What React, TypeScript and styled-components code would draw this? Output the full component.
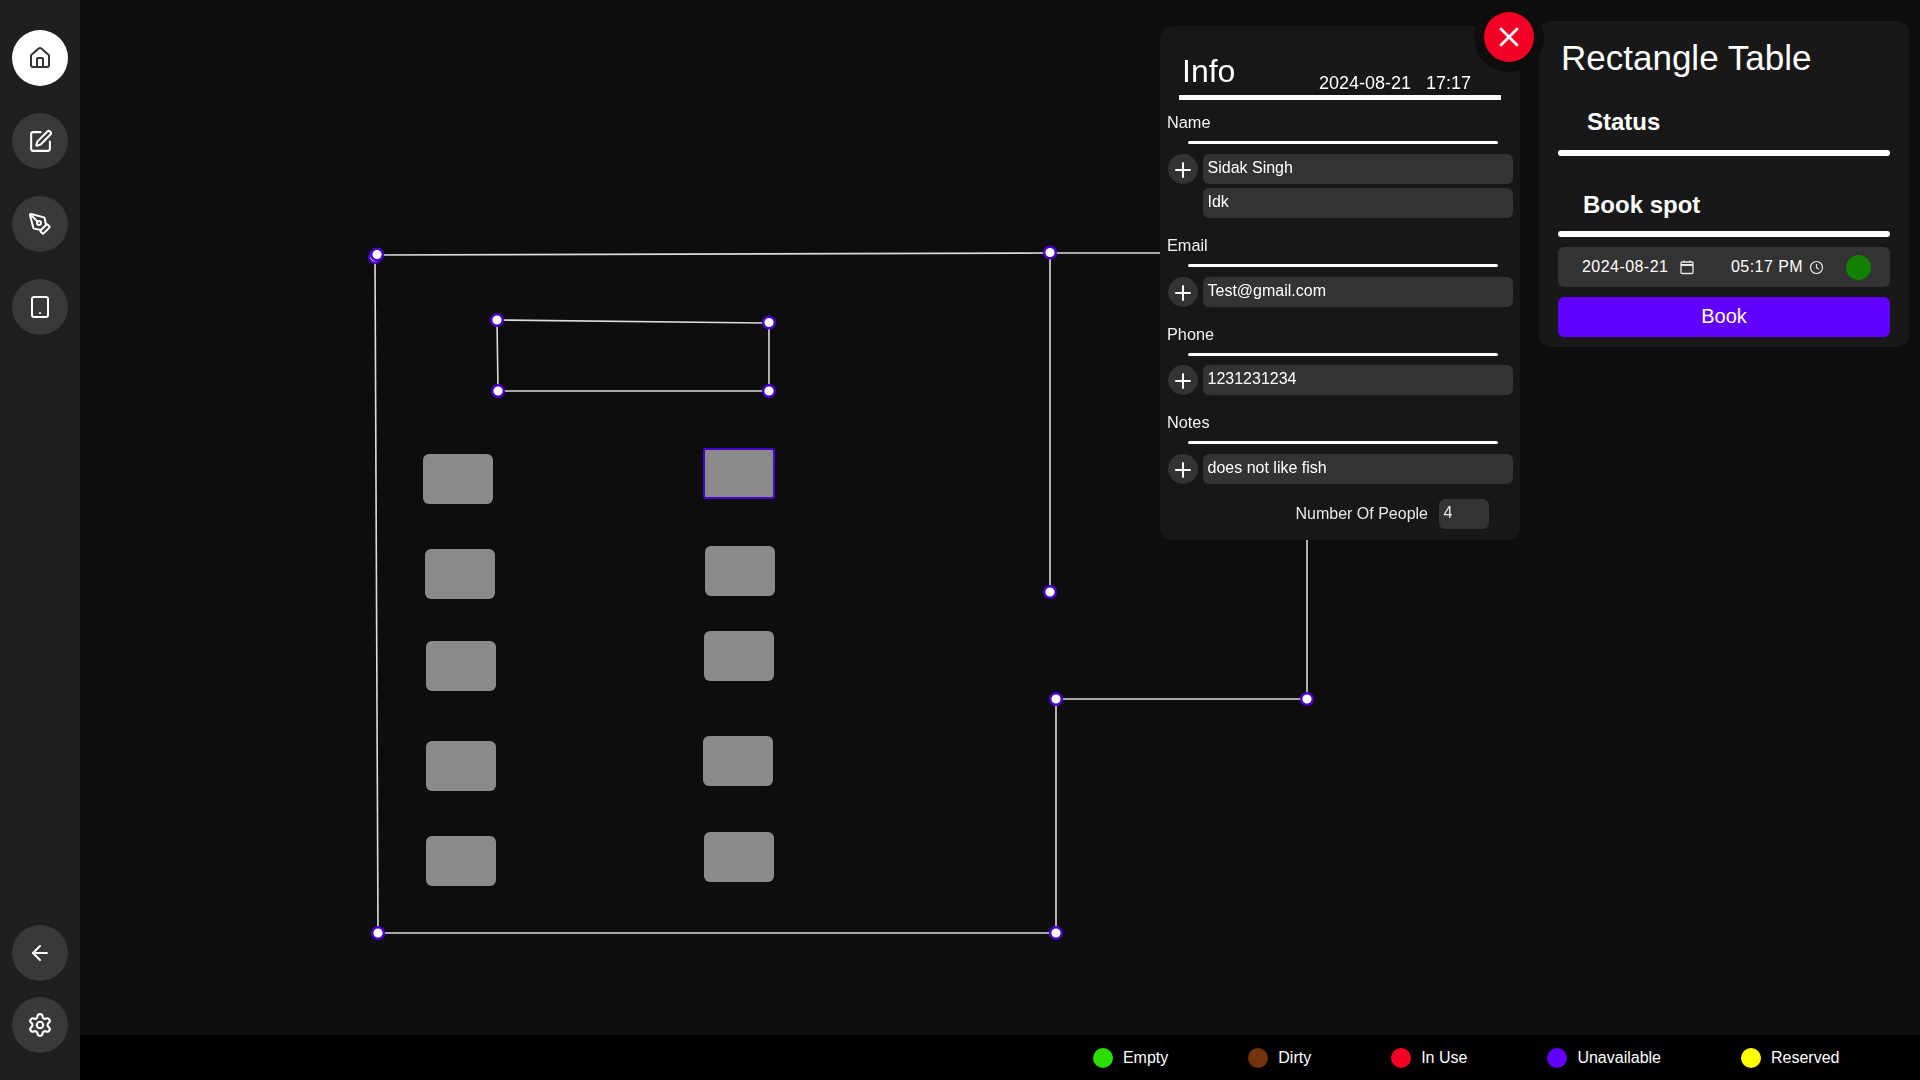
import React from 'react'
import styled, { createGlobalStyle } from 'styled-components'
import { ArrowLeft, House, PenTool, Plus, Settings, SquarePen, Tablet, X } from 'lucide-react'

const GlobalStyle = createGlobalStyle`
  html, body { margin: 0; padding: 0; background: #0d0d0d; }
  * { box-sizing: border-box; }
  body { font-family: "Liberation Sans", Arial, sans-serif; color: #fff; overflow: hidden; }
`

const Page = styled.div`
  display: flex;
  width: 1920px;
  height: 1080px;
`

// sidebar
const Sidebar = styled.nav`
  width: 80px;
  flex: none;
  display: flex;
  flex-direction: column;
  justify-content: space-between;
  align-items: center;
  padding: 30px 0 27px;
  background: #1f1f1f;
`
const NavGroup = styled.div<{ $gap: number }>`
  display: flex;
  flex-direction: column;
  gap: ${p => p.$gap}px;
`
const NavButton = styled.button<{ $active?: boolean }>`
  width: 56px;
  height: 56px;
  padding: 0;
  border: 0;
  border-radius: 50%;
  display: flex;
  align-items: center;
  justify-content: center;
  background: ${p => (p.$active ? '#fff' : '#3a3939')};
  color: ${p => (p.$active ? '#333' : '#fff')};
`

// main area
const Main = styled.main`
  flex: 1;
  display: flex;
  flex-direction: column;
  min-width: 0;
`
const Canvas = styled.div`
  position: relative;
  flex: 1;
  background: #0d0d0d;
`
const Plan = styled.svg`
  position: absolute;
  inset: 0;
  width: 100%;
  height: 100%;
`
const Legend = styled.footer`
  height: 45px;
  flex: none;
  display: flex;
  justify-content: flex-end;
  align-items: center;
  gap: 80px;
  padding-right: 80.5px;
  background: #000;
`
const LegendItem = styled.div`
  display: flex;
  align-items: center;
  gap: 10px;
  font-size: 16px;
`
const Dot = styled.span<{ $color: string; $size?: number }>`
  display: block;
  flex: none;
  width: ${p => p.$size || 20}px;
  height: ${p => p.$size || 20}px;
  border-radius: 50%;
  background: ${p => p.$color};
`

// info panel
const InfoPanel = styled.section`
  position: absolute;
  top: 26px;
  right: 400px;
  z-index: 2;
  width: 360px;
  padding: 0 7px 11px;
  border-radius: 12px;
  background: rgba(24, 24, 24, 0.97);
  backdrop-filter: blur(16px);
`
const CloseButton = styled.button`
  position: absolute;
  top: -14px;
  left: 324px;
  width: 50px;
  height: 50px;
  padding: 0;
  border: 0;
  border-radius: 50%;
  display: flex;
  align-items: center;
  justify-content: center;
  color: #fff;
  background: #f50025;
  box-shadow: 0 0 0 10px #0d0d0d;
`
const InfoHeader = styled.header`
  height: 69px;
  margin: 0 12px;
  padding: 0 0 1px 3px;
  display: flex;
  align-items: flex-end;
`
const InfoTitle = styled.h2`
  margin: 0 0 4px;
  width: 137px;
  font-size: 32px;
  line-height: 38px;
  font-weight: 400;
`
const InfoStamp = styled.div`
  font-size: 18px;
  line-height: 21px;
  white-space: pre;
`
const HeaderRule = styled.div`
  height: 5px;
  margin: 0 12px;
  background: #fff;
`
const Section = styled.div`
  margin-top: 12px;
  & + & { margin-top: 17px; }
`
const Label = styled.div`
  height: 20px;
  font-size: 16.3px;
  line-height: 20px;
  color: #f2f2f2;
`
const SubRule = styled.div<{ $after: number }>`
  width: 310px;
  height: 3px;
  margin: 9px 0 ${p => p.$after}px 21px;
  border-radius: 2px;
  background: #fff;
`
const FieldRow = styled.div`
  display: flex;
  align-items: center;
  gap: 5px;
  padding-left: 1px;
  & + & { margin-top: 4px; padding-left: 36px; }
`
const AddButton = styled.button`
  width: 30px;
  height: 30px;
  flex: none;
  padding: 1px 0 0;
  border: 0;
  border-radius: 50%;
  display: flex;
  align-items: center;
  justify-content: center;
  color: #fff;
  background: #333;
`
const Field = styled.div<{ $width: number }>`
  width: ${p => p.$width}px;
  height: 30px;
  padding: 0 4.5px;
  border-radius: 6px;
  background: #333;
  font-size: 16px;
  line-height: 28.5px;
  white-space: nowrap;
`
const PeopleRow = styled.div`
  margin-top: 15px;
  padding-right: 24px;
  display: flex;
  justify-content: flex-end;
  align-items: center;
  gap: 11px;
  font-size: 16px;
  color: #e8e8e8;
`

// booking panel
const BookPanel = styled.section`
  position: absolute;
  top: 21px;
  right: 11px;
  z-index: 1;
  width: 370px;
  padding: 16px 19px 10px;
  border-radius: 12px;
  background: #181818;
`
const BookTitle = styled.h1`
  margin: 0;
  padding-left: 3px;
  font-size: 35px;
  line-height: 42px;
  font-weight: 400;
`
const SubHeading = styled.h3<{ $top: number; $indent: number }>`
  height: 28px;
  margin: ${p => p.$top}px 0 0;
  padding-left: ${p => p.$indent}px;
  font-size: 24px;
  line-height: 29px;
  font-weight: 700;
`
const ThickRule = styled.div<{ $top: number }>`
  height: 6px;
  margin-top: ${p => p.$top}px;
  border-radius: 3px;
  background: #fff;
`
const DateRow = styled.div`
  height: 40px;
  margin-top: 10px;
  padding-left: 24px;
  display: flex;
  align-items: center;
  border-radius: 6px;
  background: #333;
  font-size: 16px;
  letter-spacing: 0.45px;
`
const DatePart = styled.span<{ $width: number }>`
  width: ${p => p.$width}px;
  display: flex;
  align-items: center;
  flex: none;
`
const IconSlot = styled.span<{ $left: number }>`
  display: flex;
  margin-left: ${p => p.$left}px;
`
const BookButton = styled.button`
  width: 100%;
  height: 40px;
  margin-top: 10px;
  padding: 0 0 2px;
  border: 0;
  border-radius: 6px;
  background: #6200ff;
  color: #fff;
  font-family: inherit;
  font-size: 20px;
`

const segments = [
  [377, 255, 1050, 253],
  [1050, 253, 1307, 253],
  [1050, 253, 1050, 592],
  [1307, 253, 1307, 699],
  [1307, 699, 1056, 699],
  [1056, 699, 1056, 933],
  [1056, 933, 378, 933],
  [378, 933, 375, 257],
  [497, 320, 769, 323],
  [769, 323, 769, 391],
  [769, 391, 498, 391],
  [498, 391, 497, 320]
]
const nodes = [
  [375, 257], [377, 254.5], [1050, 252.5], [1307, 253], [1050, 592], [1056, 699], [1307, 699], [378, 933], [1056, 933],
  [497, 320], [769, 322.5], [498, 391], [769, 391]
]
const tables = [
  [423, 454], [425, 549], [426, 641], [426, 741], [426, 836],
  [705, 546], [704, 631], [703, 736], [704, 832]
]

const legend = [
  { label: 'Empty', color: '#2adf00' },
  { label: 'Dirty', color: '#74330a' },
  { label: 'In Use', color: '#f50025' },
  { label: 'Unavailable', color: '#6200ff' },
  { label: 'Reserved', color: '#ffff00' }
]

const infoSections = [
  { label: 'Name', after: 10, values: ['Sidak Singh', 'Idk'] },
  { label: 'Email', after: 10, values: ['Test@gmail.com'] },
  { label: 'Phone', after: 9, values: ['1231231234'] },
  { label: 'Notes', after: 10, values: ['does not like fish'] }
]

function CalendarIcon () {
  return <svg width="16" height="16" viewBox="0 0 16 16" fill="none" stroke="#e8e8e8" strokeWidth="1.3">
    <rect x="2" y="3" width="12" height="11.5" rx="1" />
    <path d="M2 6h12" strokeWidth="2" />
    <path d="M5 1.5v2M11 1.5v2" />
  </svg>
}

function ClockIcon () {
  return <svg width="15" height="15" viewBox="0 0 15 15" fill="none" stroke="#e8e8e8" strokeWidth="1.2">
    <circle cx="7.5" cy="7.5" r="6" />
    <path d="M7.5 4v3.7l2.4 1.5" />
  </svg>
}

export default function App () {
  return <Page>
    <GlobalStyle />
    <Sidebar>
      <NavGroup $gap={27}>
        <NavButton $active><House size={24} /></NavButton>
        <NavButton><SquarePen size={25} /></NavButton>
        <NavButton><PenTool size={24} /></NavButton>
        <NavButton><Tablet size={24} /></NavButton>
      </NavGroup>
      <NavGroup $gap={16}>
        <NavButton><ArrowLeft size={24} /></NavButton>
        <NavButton><Settings size={26} /></NavButton>
      </NavGroup>
    </Sidebar>
    <Main>
      <Canvas>
        <Plan viewBox="80 0 1840 1035">
          {segments.map(([x1, y1, x2, y2], i) => (
            <line key={i} x1={x1} y1={y1} x2={x2} y2={y2} stroke="#dcdcdc" strokeWidth="1.6" />
          ))}
          {nodes.map(([cx, cy], i) => (
            <circle key={i} cx={cx} cy={cy} r="5.8" fill="#fff" stroke="#4a00d0" strokeWidth="2.4" />
          ))}
          {tables.map(([x, y], i) => (
            <rect key={i} x={x} y={y} width="70" height="50" rx="6" fill="#8a8a8a" />
          ))}
          <rect x="704" y="449" width="70" height="49" rx="2" fill="#8a8a8a" stroke="#4a00d0" strokeWidth="2" />
        </Plan>
        <BookPanel>
          <BookTitle>Rectangle Table</BookTitle>
          <SubHeading $top={28} $indent={29}>Status</SubHeading>
          <ThickRule $top={15} />
          <SubHeading $top={34} $indent={25}>Book spot</SubHeading>
          <ThickRule $top={13} />
          <DateRow>
            <DatePart $width={149}>2024-08-21<IconSlot $left={11}><CalendarIcon /></IconSlot></DatePart>
            <DatePart $width={115}>05:17 PM<IconSlot $left={6}><ClockIcon /></IconSlot></DatePart>
            <Dot $color="#148000" $size={25} />
          </DateRow>
          <BookButton>Book</BookButton>
        </BookPanel>
        <InfoPanel>
          <CloseButton><X size={32} /></CloseButton>
          <InfoHeader>
            <InfoTitle>Info</InfoTitle>
            <InfoStamp>2024-08-21   17:17</InfoStamp>
          </InfoHeader>
          <HeaderRule />
          {infoSections.map(section => (
            <Section key={section.label}>
              <Label>{section.label}</Label>
              <SubRule $after={section.after} />
              {section.values.map((value, i) => (
                <FieldRow key={value}>
                  {i === 0 && <AddButton><Plus size={24} /></AddButton>}
                  <Field $width={310}>{value}</Field>
                </FieldRow>
              ))}
            </Section>
          ))}
          <PeopleRow>
            Number Of People
            <Field $width={50}>4</Field>
          </PeopleRow>
        </InfoPanel>
      </Canvas>
      <Legend>
        {legend.map(item => (
          <LegendItem key={item.label}>
            <Dot $color={item.color} />
            {item.label}
          </LegendItem>
        ))}
      </Legend>
    </Main>
  </Page>
}
